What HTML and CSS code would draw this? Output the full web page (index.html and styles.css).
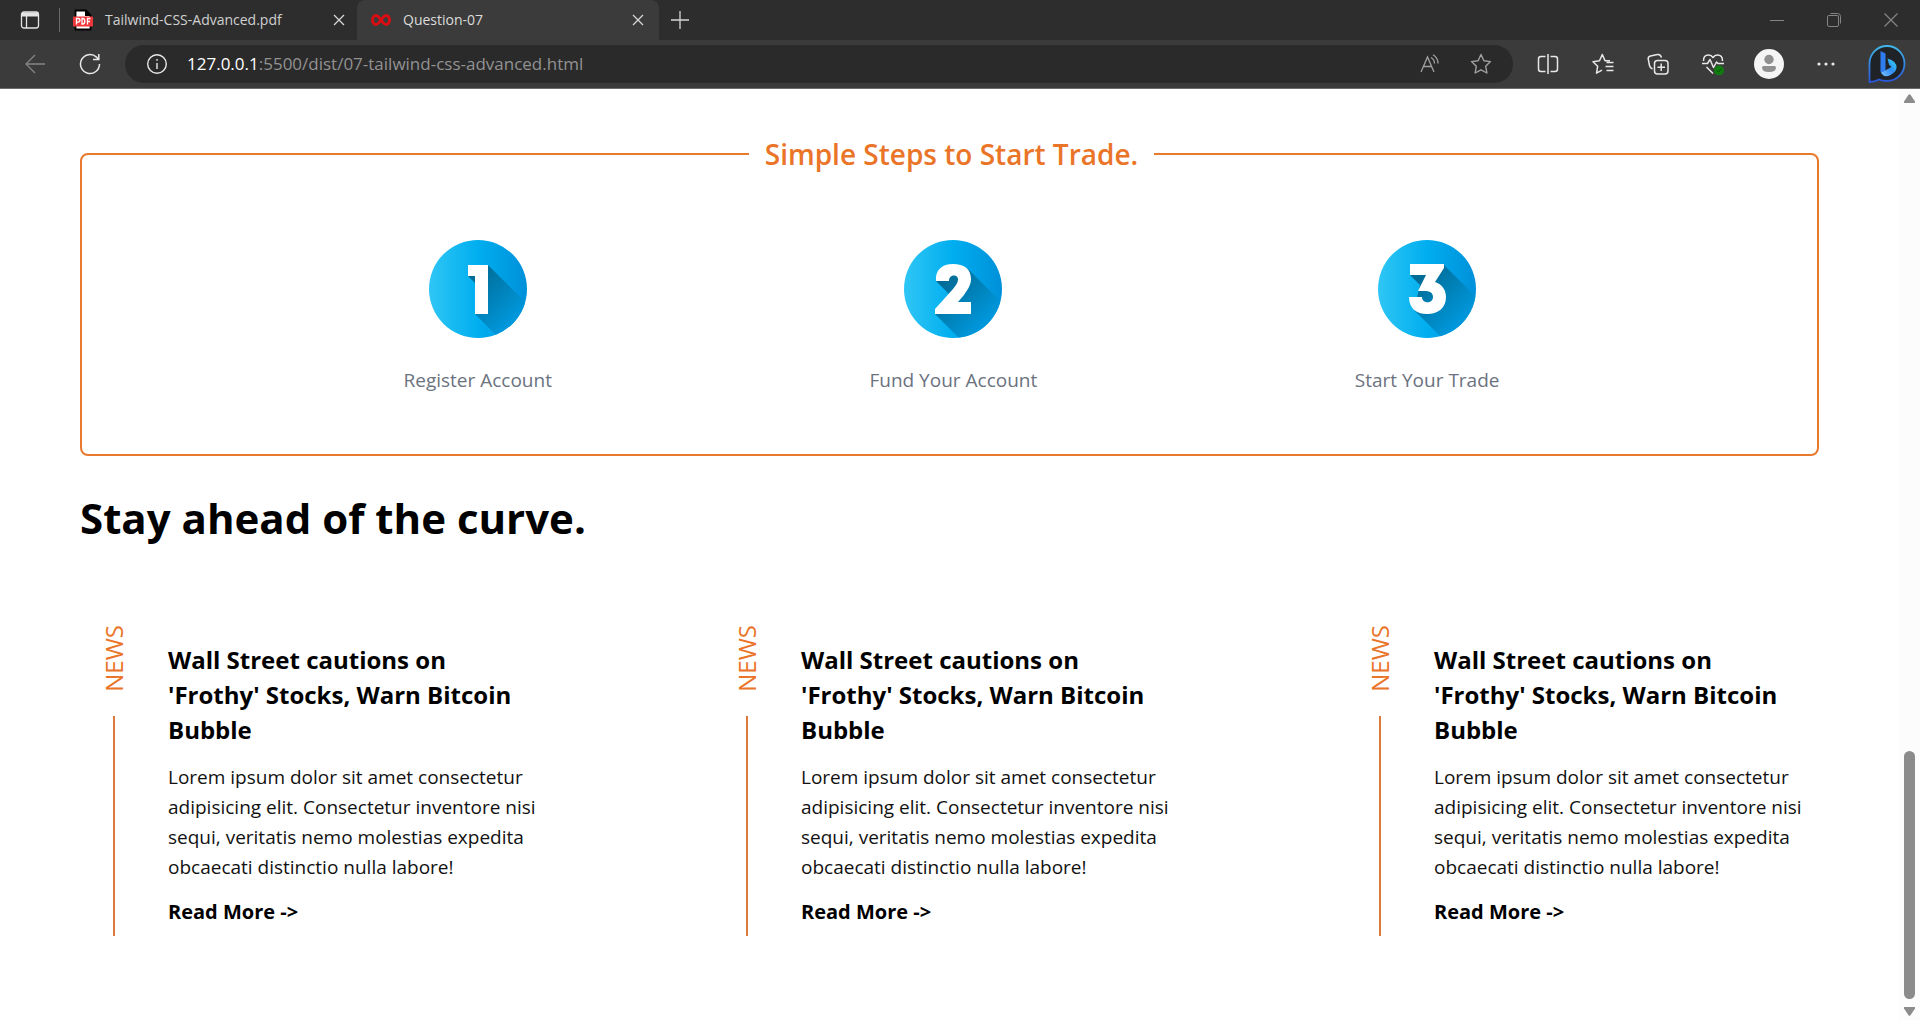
FILE: index.html
```html
<!DOCTYPE html>
<html lang="en">
<head>
<meta charset="utf-8">
<title>Question-07</title>
<link rel="stylesheet" href="styles.css">
</head>
<body>
<div class="browser">
  <header class="chrome">
    <div class="tabstrip">
      <button class="icon-btn workspace" aria-label="Tab actions"><svg width="20" height="20" viewBox="0 0 20 20" fill="none" stroke="#e4e4e4" stroke-width="1.3"><rect x="1.5" y="2" width="17" height="16" rx="2.5"/><path d="M2 4.5h16" stroke-width="4"/><path d="M6.5 5v13"/></svg></button>
      <span class="divider"></span>
      <div class="tab">
        <svg width="20" height="22" viewBox="0 0 20 22"><path d="M2.500 1.500h10.500l4.500 4.500v14.500h-15z" fill="#fff" stroke="#000" stroke-width="1.800"/><path d="M12 1v6h6z" fill="#000"/><rect y="7.500" width="20" height="10" rx="1" fill="#f0383c"/><path d="M3.500 15.500v-6h1.500q2 0 2 1.800t-2 1.800H3.500M9 9.500v5.500h.8q2 0 2-2.700t-2-2.800zM14.500 15.500v-6h3M14.500 12.500h2.500" fill="none" stroke="#fff" stroke-width="1.300"/></svg>
        <span class="tab-title">Tailwind-CSS-Advanced.pdf</span>
        <button class="icon-btn" aria-label="Close tab"><svg width="12" height="12" viewBox="0 0 12 12" stroke="#d6d6d6" stroke-width="1.300"><path d="M1 1l10 10M11 1L1 11"/></svg></button>
      </div>
      <div class="tab active">
        <svg width="20" height="22" viewBox="0 0 20 22" fill="none" stroke="#d90d12" stroke-width="3"><path d="M10 11C7.500 7.500 6.500 6.500 5 6.500C3 6.500 1.500 8.500 1.500 11S3 15.500 5 15.500C6.500 15.500 7.500 14.500 10 11S13.500 6.500 15 6.500C17 6.500 18.500 8.500 18.500 11S17 15.500 15 15.500C13.500 15.500 12.500 14.500 10 11Z"/></svg>
        <span class="tab-title">Question-07</span>
        <button class="icon-btn" aria-label="Close tab"><svg width="12" height="12" viewBox="0 0 12 12" stroke="#d6d6d6" stroke-width="1.300"><path d="M1 1l10 10M11 1L1 11"/></svg></button>
      </div>
      <button class="icon-btn new-tab" aria-label="New tab"><svg width="18" height="18" viewBox="0 0 18 18" stroke="#d6d6d6" stroke-width="1.300"><path d="M9 0v18M0 9h18"/></svg></button>
      <div class="window-controls">
        <button class="icon-btn" aria-label="Minimize"><svg width="14" height="14" viewBox="0 0 14 14" stroke="#858585"><path d="M0 7.500h14"/></svg></button>
        <button class="icon-btn" aria-label="Restore"><svg width="14" height="14" viewBox="0 0 14 14" fill="none" stroke="#858585"><rect x=".5" y="2.500" width="11" height="11" rx="1.500"/><path d="M3.500 .5h7q3 0 3 3v7"/></svg></button>
        <button class="icon-btn" aria-label="Close window"><svg width="14" height="14" viewBox="0 0 14 14" stroke="#858585" stroke-width="1.200"><path d="M.5 .5l13 13M13.500 .5l-13 13"/></svg></button>
      </div>
    </div>
    <div class="toolbar">
      <button class="icon-btn" aria-label="Back"><svg width="20" height="20" viewBox="0 0 20 20" fill="none" stroke="#858585" stroke-width="1.300"><path d="M20 10H1M10 1L1 10l9 9"/></svg></button>
      <button class="icon-btn" aria-label="Reload"><svg width="22" height="22" viewBox="0 0 22 22" fill="none" stroke="#e8e8e8" stroke-width="1.500"><path d="M20.500 11a9.500 9.500 0 1 1-3-6.900L19.500 6.500M19.800 1v5.500H14"/></svg></button>
      <div class="address">
        <svg width="22" height="22" viewBox="0 0 22 22" fill="none" stroke="#e8e8e8" stroke-width="1.400"><circle cx="11" cy="11" r="9.300"/><path d="M11 10v6M11 6v1.700"/></svg>
        <span class="url"><b>127.0.0.1</b>:5500/dist/07-tailwind-css-advanced.html</span>
        <button class="icon-btn" aria-label="Read aloud"><svg width="20" height="20" viewBox="0 0 20 20" fill="none" stroke="#a0a0a0" stroke-width="1.300"><path d="M1 18L7.500 3L14 18M3.500 12.500h8M11 3.500q3.500 2 3.500 6M13 .8q5 3 5 8.700"/></svg></button>
        <button class="icon-btn" aria-label="Add to favorites"><svg width="22" height="22" viewBox="0 0 22 22" fill="none" stroke="#a0a0a0" stroke-width="1.400" stroke-linejoin="round"><path d="M11 1.500l2.900 6.200 6.600.9-4.800 4.700 1.200 6.700-5.900-3.200L5.100 20l1.200-6.700L1.500 8.600l6.600-.9z"/></svg></button>
      </div>
      <div class="tools">
        <button class="icon-btn" aria-label="Split screen"><svg width="22" height="22" viewBox="0 0 22 22" fill="none" stroke="#e8e8e8" stroke-width="1.500"><path d="M8.500 3.500H4q-2.500 0-2.500 2.500v10q0 2.500 2.500 2.500h4.500M13.500 3.500H18q2.500 0 2.500 2.500v10q0 2.500-2.500 2.500h-4.500M11 1v20"/></svg></button>
        <button class="icon-btn" aria-label="Favorites"><svg width="22" height="22" viewBox="0 0 22 22" fill="none" stroke="#e8e8e8" stroke-width="1.500" stroke-linejoin="round"><path d="M18 7.700H13L10.300 1.500 7.500 7.700l-6.500 1 4.700 4.500-1.200 7 5.500-3M14.500 9.500h7M13.500 13.500h8M14.500 17.500h7"/></svg></button>
        <button class="icon-btn" aria-label="Collections"><svg width="22" height="22" viewBox="0 0 22 22" fill="none" stroke="#e8e8e8" stroke-width="1.500"><rect x="7.500" y="7.500" width="13.500" height="13.500" rx="3"/><path d="M14.200 10.500v7.500M10.500 14.200H18M5.500 16Q3 15 2.500 12.500L1.200 6Q1 3.500 3.500 3L10.500 1.500Q13.500 1 14.500 4.500"/></svg></button>
        <button class="icon-btn" aria-label="Browser essentials"><svg width="22" height="22" viewBox="0 0 22 22" fill="none" stroke="#e8e8e8" stroke-width="1.500" stroke-linejoin="round"><path d="M1.500 8Q1.300 2 6.500 2Q9.500 2 11 4.500Q12.500 2 15.500 2Q20.700 2 20.500 8M0 10.500h5.500l2.500-4 3.500 8 3-5.500 1.500 1.500H22M4.500 14l6.500 6.500"/><circle cx="17" cy="17.500" r="5" fill="#107c10" stroke="none"/><path d="M15 17.500l1.500 1.500 2.800-3" stroke="#075007" stroke-width="1"/></svg></button>
        <button class="icon-btn profile" aria-label="Profile"><svg width="30" height="30" viewBox="0 0 30 30"><circle cx="15" cy="15" r="15" fill="#f5f5f5"/><circle cx="15" cy="10.500" r="4.700" fill="#909090"/><path d="M9.500 17h11q1.500 0 1.500 1.500q0 4.500-7 4.500t-7-4.500q0-1.500 1.500-1.500z" fill="#909090"/></svg></button>
        <button class="icon-btn" aria-label="Settings and more"><svg width="18" height="18" viewBox="0 0 18 18" fill="#e8e8e8"><circle cx="2" cy="9" r="1.600"/><circle cx="9" cy="9" r="1.600"/><circle cx="16" cy="9" r="1.600"/></svg></button>
        <button class="icon-btn" aria-label="Bing chat"><svg width="38" height="40" viewBox="0 0 38 40"><defs><linearGradient id="ring" x1="0" y1="0" x2="0" y2="1"><stop stop-color="#3fb6e8"/><stop offset="1" stop-color="#2a55d8"/></linearGradient><linearGradient id="bb" x1="0" y1="1" x2="1" y2="0"><stop stop-color="#7cc4ff"/><stop offset=".5" stop-color="#2f8cf5"/><stop offset="1" stop-color="#35dcf0"/></linearGradient></defs><path d="M1.500 38V19.500A17.500 17.500 0 1 1 19 37Q14 37 11 35.500Q7 38 1.500 38z" fill="#1f2226" stroke="url(#ring)" stroke-width="1.800"/><path d="M12.500 7l5 2.500v17l-3 4-2-3z" fill="#2f7cf0"/><path d="M19.500 14.500q9 2.500 9 9 0 4-6 7.500-6 3-9-1.500-1-2 1-1.500l9-5-2.500-2.500z" fill="url(#bb)"/></svg></button>
      </div>
    </div>
  </header>
  <div class="viewport">
    <main class="page">
      <fieldset class="steps">
        <legend>Simple Steps to Start Trade.</legend>
        <div class="step">
          <svg class="badge" viewBox="0 0 98 98" role="img" aria-label="1"><defs><linearGradient id="disc"><stop stop-color="#2fc6f5"/><stop offset=".5" stop-color="#00aeef"/><stop offset="1" stop-color="#0090da"/></linearGradient><linearGradient id="shade" gradientUnits="userSpaceOnUse" x1="45" y1="35" x2="88" y2="78"><stop stop-color="#006c96"/><stop offset="1" stop-color="#0098dd"/></linearGradient><clipPath id="round"><circle cx="49" cy="49" r="49"/></clipPath></defs><circle cx="49" cy="49" r="49" fill="url(#disc)"/><path clip-path="url(#round)" d="M39 36L59 25l60 60-13 49-60-60V43z" fill="url(#shade)"/><path d="M39 25h20v49H46V36h-7z" fill="#fff"/></svg>
          <span>Register Account</span>
        </div>
        <div class="step">
          <svg class="badge" viewBox="0 0 98 98" role="img" aria-label="2"><circle cx="49" cy="49" r="49" fill="url(#disc)"/><path clip-path="url(#round)" d="M32 41L64 29l60 60-33 45-60-60 15-19z" fill="url(#shade)"/><path d="M32 41C31 30 38 24 49 24C60 24 67 29 67 39C67 45 64 49 60 55L54 62H67V74H31V69L49 49C53 44 54 42 54 39C54 34 45 34 45 41Z" fill="#fff"/></svg>
          <span>Fund Your Account</span>
        </div>
        <div class="step">
          <svg class="badge" viewBox="0 0 98 98" role="img" aria-label="3"><circle cx="49" cy="49" r="49" fill="url(#disc)"/><path clip-path="url(#round)" d="M32 35L66 25l60 60-30 45-60-60 6-25z" fill="url(#shade)"/><path d="M32 24H66V28L57 42C64 44 68 50 68 57C68 68 60 74 49 74C38 74 31 68 31 57H44C44 64 55 64 55 57C55 53 52 51 47 51H40L48 35H32Z" fill="#fff"/></svg>
          <span>Start Your Trade</span>
        </div>
      </fieldset>
      <h1>Stay ahead of the curve.</h1>
      <section class="news">
        <article class="card">
          <div class="rail"><span class="tag">NEWS</span><span class="line"></span></div>
          <div class="story"><h2>Wall Street cautions on 'Frothy' Stocks, Warn Bitcoin Bubble</h2><p>Lorem ipsum dolor sit amet consectetur adipisicing elit. Consectetur inventore nisi sequi, veritatis nemo molestias expedita obcaecati distinctio nulla labore!</p><a href="#">Read More -&gt;</a></div>
        </article>
        <article class="card">
          <div class="rail"><span class="tag">NEWS</span><span class="line"></span></div>
          <div class="story"><h2>Wall Street cautions on 'Frothy' Stocks, Warn Bitcoin Bubble</h2><p>Lorem ipsum dolor sit amet consectetur adipisicing elit. Consectetur inventore nisi sequi, veritatis nemo molestias expedita obcaecati distinctio nulla labore!</p><a href="#">Read More -&gt;</a></div>
        </article>
        <article class="card">
          <div class="rail"><span class="tag">NEWS</span><span class="line"></span></div>
          <div class="story"><h2>Wall Street cautions on 'Frothy' Stocks, Warn Bitcoin Bubble</h2><p>Lorem ipsum dolor sit amet consectetur adipisicing elit. Consectetur inventore nisi sequi, veritatis nemo molestias expedita obcaecati distinctio nulla labore!</p><a href="#">Read More -&gt;</a></div>
        </article>
      </section>
    </main>
    <div class="scrollbar" aria-hidden="true">
      <svg width="11" height="9" viewBox="0 0 11 9" fill="#8b8b8b"><path d="M4.500 .7q1-1 2 0L11 7.500V9H0V7.500z"/></svg>
      <span class="thumb"></span>
      <svg width="11" height="9" viewBox="0 0 11 9" fill="#8b8b8b"><path d="M4.500 8.300q1 1 2 0L11 1.500V0H0v1.500z"/></svg>
    </div>
  </div>
</div>
</body>
</html>
```
FILE: styles.css
```css
* { box-sizing: border-box; margin: 0; padding: 0; }
body { font-family: "Open Sans", "Noto Sans", sans-serif; font-size: 19px; line-height: 30px; color: #000; background: #fff; }
svg { display: block; flex: none; }
.browser { display: flex; flex-direction: column; min-height: 100vh; }

.chrome { background: #3b3b3b; border-bottom: 1px solid #6a6a6a; }
.icon-btn { display: flex; align-items: center; justify-content: center; background: none; border: 0; }
.tabstrip { display: flex; align-items: center; height: 40px; background: #2d2d2d; }
.workspace { width: 59px; }
.divider { width: 1px; height: 24px; background: #6a6a6a; }
.tab { display: flex; align-items: center; gap: 12px; width: 297px; height: 40px; padding: 0 12px 0 13px; font-size: 14px; line-height: 20px; color: #d0d0d0; }
.tab.active { width: 302px; padding: 0 15px 0 14px; background: #3b3b3b; border-radius: 8px 8px 0 0; color: #dcdcdc; }
.tab-title { flex: 1; }
.new-tab { width: 42px; }
.window-controls { display: flex; gap: 43px; margin-left: auto; padding-right: 22px; }

.toolbar { display: flex; align-items: center; height: 48px; padding: 0 14px 0 25px; }
.toolbar > .icon-btn { margin-right: 34px; }
.toolbar > .icon-btn + .icon-btn { margin-right: 24px; }
.address { display: flex; flex: 1; align-items: center; gap: 30px; height: 38px; padding: 0 21px; border-radius: 19px; background: #2a2a2a; }
.url { flex: 1; margin-left: -11px; font-size: 17px; color: #929292; }
.url b { font-weight: 400; color: #fff; }
.tools { display: flex; align-items: center; gap: 33px; margin-left: 24px; }
.profile { margin-left: -3px; }

.viewport { display: flex; flex: 1; }
.page { flex: 1; padding: 45px 80px; }
.steps { display: flex; justify-content: space-evenly; padding: 66px 0 59px 4px; border: 2px solid #e8792f; border-radius: 8px; }
.steps legend { margin: 0 auto; padding: 0 16px; font-size: 28px; line-height: 40px; font-weight: 600; color: #ea7428; }
.step { display: flex; flex-direction: column; align-items: center; gap: 27px; color: #6b7280; }
.badge { width: 98px; height: 98px; }
h1 { margin-top: 32px; font-size: 42px; line-height: 60px; font-weight: 700; }
.news { display: grid; grid-template-columns: repeat(3, 1fr); gap: 160px; margin-top: 77px; }
.card { display: flex; gap: 42px; padding: 0 16px 0 22px; }
.rail { display: flex; flex-direction: column; align-items: center; gap: 24px; width: 24px; flex: none; }
.tag { writing-mode: vertical-rl; transform: rotate(180deg); font-size: 24px; line-height: 24px; color: #ea7428; }
.line { flex: 1; width: 2px; background: #dc7a3c; }
.story { flex: 1; padding: 17px 0 9px; }
h2 { font-size: 24px; line-height: 35px; font-weight: 700; }
.story p { margin: 15px 0; color: #111; }
.story a { color: #000; font-size: 20px; font-weight: 700; text-decoration: none; }

.scrollbar { display: flex; flex-direction: column; align-items: center; width: 21px; padding: 5px 0 4px; background: #fcfcfc; }
.thumb { width: 11px; height: 248px; margin: auto 0 8px; border-radius: 6px; background: #8b8b8b; }
```
